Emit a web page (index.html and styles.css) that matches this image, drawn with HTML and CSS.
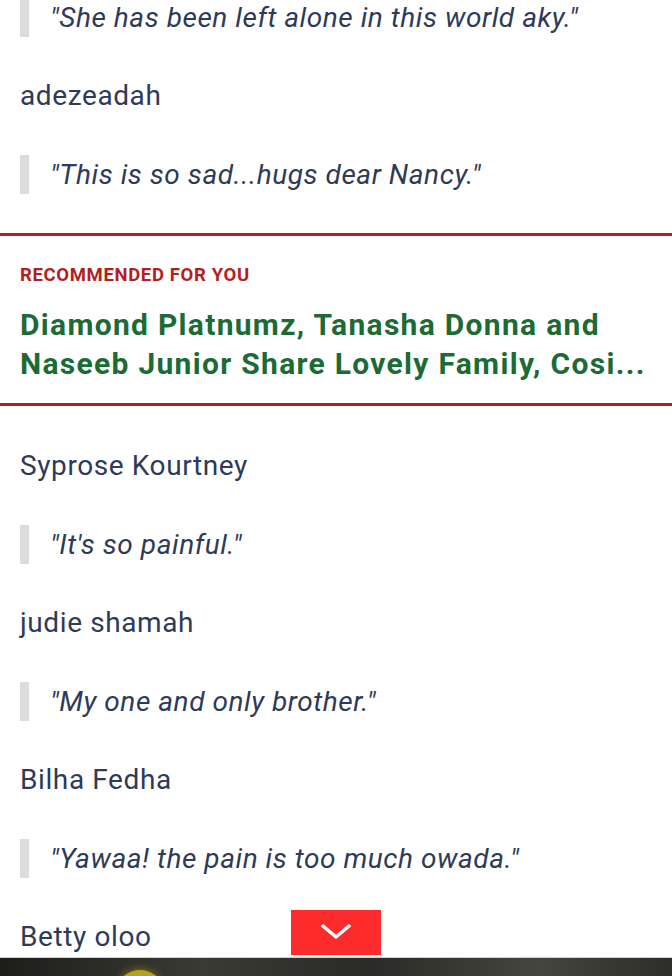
FILE: index.html
```html
<!DOCTYPE html>
<html lang="en">
  <head>
    <meta charset="utf-8" />
    <meta name="viewport" content="width=device-width, initial-scale=1" />
    <title>Comments</title>
    <link rel="stylesheet" href="styles.css">
  </head>
  <body>
    <div class="article">
      <blockquote class="quote first">"She has been left alone in this world aky."</blockquote>
      <p class="name">adezeadah</p>
      <blockquote class="quote">"This is so sad...hugs dear Nancy."</blockquote>

      <div class="recommended">
        <div class="label">RECOMMENDED FOR YOU</div>
        <a class="title" href="#">Diamond Platnumz, Tanasha Donna and Naseeb Junior Share Lovely Family, Cosi...</a>
      </div>

      <p class="name">Syprose Kourtney</p>
      <blockquote class="quote">"It's so painful."</blockquote>
      <p class="name">judie shamah</p>
      <blockquote class="quote">"My one and only brother."</blockquote>
      <p class="name">Bilha Fedha</p>
      <blockquote class="quote">"Yawaa! the pain is too much owada."</blockquote>
      <p class="name last">Betty oloo</p>
    </div>

    <div class="photo"><span class="glow"></span></div>

    <button class="more" type="button">
      <svg width="30" height="16" viewBox="0 0 30 16"><path d="M2 2 L15 13 L28 2" fill="none" stroke="#fff" stroke-width="3.5" stroke-linecap="round" stroke-linejoin="round"/></svg>
    </button>
  </body>
</html>
```

FILE: styles.css
```css
* {box-sizing: border-box}
body {
  margin: 0;
  background: #fff;
  font-family: Roboto, "Liberation Sans", sans-serif;
  color: #2e3a58;
  height: 976px;
  overflow: hidden;
  position: relative;
}
.article {
  padding: 0 20px;
  height: 957px;
  overflow: hidden;
}
.name {
  margin: 0 0 40px;
  font-size: 28px;
  line-height: 39px;
  letter-spacing: 0.6px;
}
.quote {
  margin: 0 0 39px;
  border-left: 9px solid #dcdcdc;
  padding-left: 21px;
  font-size: 28px;
  line-height: 39px;
  letter-spacing: 0.55px;
  font-style: italic;
}
.quote.first {margin-top: -2px}
.recommended {
  margin: 0 -20px 40px;
  padding: 29px 20px 20px;
  border-top: 3px solid #b31e1e;
  border-bottom: 3px solid #b31e1e;
}
.label {
  color: #b31e1e;
  font-weight: bold;
  font-size: 18.5px;
  line-height: 20px;
  letter-spacing: 0.65px;
  margin-bottom: 20px;
}
.title {
  display: block;
  color: #1c6b34;
  font-weight: bold;
  font-size: 30px;
  line-height: 39px;
  letter-spacing: 1.3px;
  text-decoration: none;
}
.photo {
  position: absolute;
  left: 0;
  right: 0;
  top: 957px;
  height: 19px;
  border-top: 1px solid #cfcfcf;
  background: linear-gradient(90deg, #1d1d19, #3a3a35 30%, #2a2a26 55%, #45453f 80%, #2d2d29);
  overflow: hidden;
}
.glow {
  position: absolute;
  left: 120px;
  top: 12px;
  width: 40px;
  height: 30px;
  border-radius: 50%;
  background: #b5a21c;
  box-shadow: 0 0 8px #8a7a10;
}
.more {
  position: absolute;
  left: 291px;
  top: 910px;
  width: 90px;
  height: 45px;
  border: 0;
  background: #fd2b2b;
  display: flex;
  align-items: center;
  justify-content: center;
  padding: 0 0 2px;
}
```
